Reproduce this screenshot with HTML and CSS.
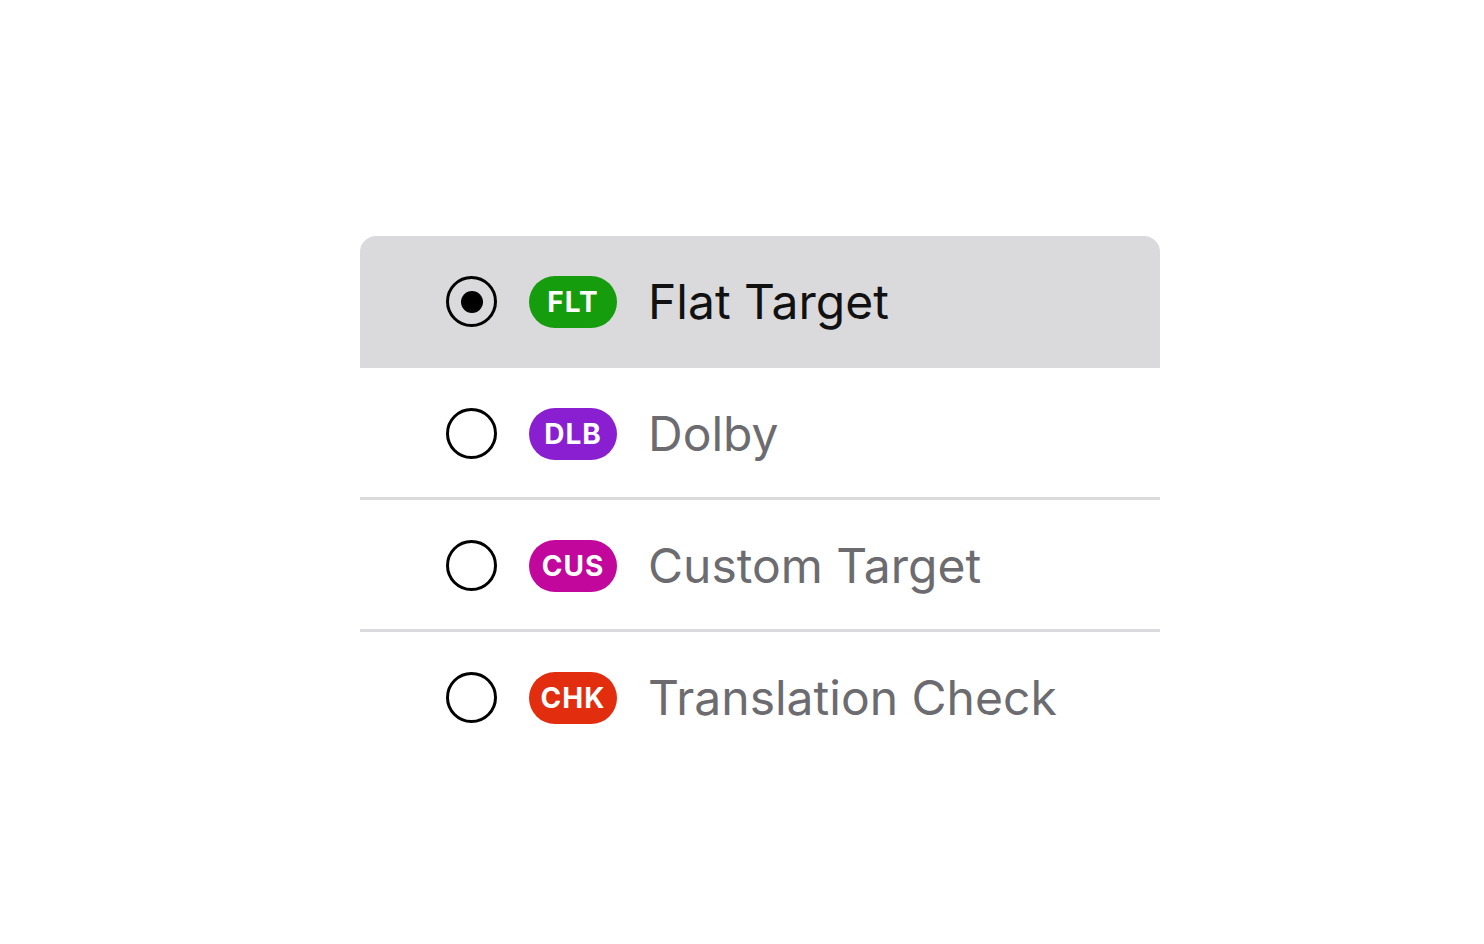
FILE: index.html
```html
<!DOCTYPE html>
<html lang="en">
<head>
<meta charset="utf-8">
<title>Targets</title>
<link rel="stylesheet" href="styles.css">
</head>
<body>
<main class="page">
  <ul class="list" role="radiogroup">
    <li class="row selected" role="radio" aria-checked="true">
      <span class="radio"><span class="dot"></span></span>
      <span class="badge flt">FLT</span>
      <span class="label">Flat Target</span>
    </li>
    <li class="row" role="radio" aria-checked="false">
      <span class="radio"></span>
      <span class="badge dlb">DLB</span>
      <span class="label">Dolby</span>
    </li>
    <li class="row" role="radio" aria-checked="false">
      <span class="radio"></span>
      <span class="badge cus">CUS</span>
      <span class="label">Custom Target</span>
    </li>
    <li class="row last" role="radio" aria-checked="false">
      <span class="radio"></span>
      <span class="badge chk">CHK</span>
      <span class="label">Translation Check</span>
    </li>
  </ul>
</main>
</body>
</html>
```

FILE: styles.css
```css
html, body {
  margin: 0;
  padding: 0;
  background: #ffffff;
}

body {
  font-family: Inter, "Noto Sans", "Liberation Sans", sans-serif;
}

.page {
  width: 1484px;
  height: 944px;
  padding-top: 236px;
  box-sizing: border-box;
  display: flex;
  justify-content: center;
  padding-left: 36px;
}

.list {
  list-style: none;
  margin: 0;
  padding: 0;
  width: 800px;
  align-self: flex-start;
}

.row {
  height: 127px;
  padding-top: 2px;
  border-bottom: 3px solid #dadadc;
  display: flex;
  align-items: center;
  padding-left: 86px;
  box-sizing: content-box;
}

.row.last {
  border-bottom: none;
}

.row.selected {
  background: #dadadc;
  border-bottom-color: #dadadc;
  border-radius: 16px 16px 0 0;
}

.radio {
  width: 51px;
  height: 51px;
  box-sizing: border-box;
  border: 3px solid #000;
  border-radius: 50%;
  display: flex;
  align-items: center;
  justify-content: center;
  flex: none;
}

.dot {
  width: 22px;
  height: 22px;
  border-radius: 50%;
  background: #000;
}

.badge {
  margin-left: 32px;
  width: 88px;
  height: 52px;
  border-radius: 26px;
  display: flex;
  align-items: center;
  justify-content: center;
  color: #fff;
  font-weight: 700;
  font-size: 28px;
  letter-spacing: 1px;
  flex: none;
}

.flt { background: #159d0d; }
.dlb { background: #8a1fd2; }
.cus { background: #c1079c; }
.chk { background: #e22d0e; }

.label {
  margin-left: 31px;
  font-size: 48px;
  color: #6c6c70;
  white-space: nowrap;
}

.selected .label {
  color: #111111;
}
```
